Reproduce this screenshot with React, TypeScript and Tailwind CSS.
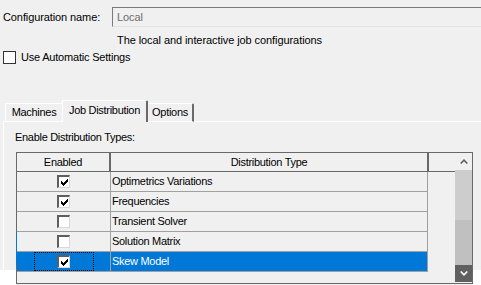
import React from "react";

const CheckMark = ({ color = "#000" }: { color?: string }) => (
  <svg width="7" height="7" viewBox="0 0 7 7" shapeRendering="crispEdges">
    <path
      d="M6 0h1v3h-1v1h-1v1h-1v1h-1v1h-1v-1h-1v-1h-1v-3h1v1h1v1h1v-1h1v-1h1z"
      fill={color}
    />
  </svg>
);

const GridCheckbox = ({ checked }: { checked: boolean }) => (
  <div className="w-[13px] h-[13px] bg-white border-t-2 border-l-2 border-t-[#5e5e5e] border-l-[#5e5e5e] border-r border-b border-r-[#d8d8d8] border-b-[#d8d8d8] flex items-center justify-center">
    {checked && <CheckMark />}
  </div>
);

const rows = [
  { label: "Optimetrics Variations", checked: true, selected: false },
  { label: "Frequencies", checked: true, selected: false },
  { label: "Transient Solver", checked: false, selected: false },
  { label: "Solution Matrix", checked: false, selected: false },
  { label: "Skew Model", checked: true, selected: true },
];

export default function App() {
  return (
    <div className="relative w-[481px] h-[285px] overflow-hidden bg-[#f0f0f0] text-black text-[11px] font-['Liberation_Sans',Arial,sans-serif] pt-[7px]">
      {/* Configuration name row */}
      <div className="flex h-[20px] items-stretch tracking-[-0.1px]">
        <div className="w-[112px] pl-[3px] flex items-center">Configuration name:</div>
        <div className="flex-1 border-t border-l border-t-[#7a7a7a] border-l-[#7a7a7a] border-b border-b-[#e3e3e3] pl-[4px] flex items-center text-[#6d6d6d]">
          Local
        </div>
      </div>

      <div className="mt-[6px] leading-[14px] pl-[117px] tracking-[-0.08px]">
        The local and interactive job configurations
      </div>

      <div className="mt-[4px] h-[13px] flex items-center pl-[3px] gap-[5px] tracking-[-0.2px]">
        <div className="w-[13px] h-[13px] border border-[#333333] bg-white" />
        <span>Use Automatic Settings</span>
      </div>

      {/* Tabs */}
      <div className="mt-[36px] flex items-end h-[22px] tracking-[-0.3px]">
        <div className="w-[3px]" />
        <div className="w-[2px] border-b border-white" />
        <div className="w-[57px] h-[19px] border-t border-l border-b border-white rounded-tl-[2px] flex items-center justify-center">
          Machines
        </div>
        <div className="w-[86px] h-[22px] border-t border-l border-white border-r-2 border-r-[#696969] rounded-t-[2px] flex items-center justify-center pb-[2px]">
          Job Distribution
        </div>
        <div className="w-[46px] h-[19px] border-t border-b border-white border-r-2 border-r-[#696969] border-b-white rounded-tr-[2px] flex items-center justify-center">
          Options
        </div>
        <div className="flex-1 border-b border-white" />
      </div>

      {/* Panel */}
      <div className="ml-[3px] border-l border-white pl-[12px] pt-[8px] h-[200px] tracking-[-0.3px]">
        <div className="leading-[14px] -ml-[1px]">Enable Distribution Types:</div>

        <div className="mt-[8px] w-[457px] h-[132px] border border-[#696969] flex">
          <div className="w-[438px] flex flex-col">
            {/* header */}
            <div className="flex h-[19px] border-b border-[#696969]">
              <div className="w-[94px] border-r-2 border-[#696969] flex items-center justify-center">
                Enabled
              </div>
              <div className="w-[318px] border-r-2 border-[#696969] flex items-center justify-center">
                Distribution Type
              </div>
              <div className="flex-1" />
            </div>
            {rows.map((r) => (
              <div key={r.label} className="flex h-[20px]">
                <div
                  className={`w-[94px] border-r border-b border-[#a0a0a0] flex items-center justify-center ${
                    r.selected ? "bg-[#0078d7]" : ""
                  }`}
                >
                  {r.selected ? (
                    <div className="w-[60px] h-[19px] border border-dotted border-black flex items-center justify-center">
                      <GridCheckbox checked={r.checked} />
                    </div>
                  ) : (
                    <GridCheckbox checked={r.checked} />
                  )}
                </div>
                <div
                  className={`w-[317px] border-r border-b border-[#a0a0a0] pl-[1px] flex items-center ${
                    r.selected ? "bg-[#0078d7] text-white" : ""
                  }`}
                >
                  {r.label}
                </div>
                <div className="flex-1" />
              </div>
            ))}
          </div>
          {/* scrollbar */}
          <div className="w-[17px] flex flex-col">
            <div className="h-[17px] bg-[#f0f0f0] flex items-center justify-center">
              <svg width="8" height="5" viewBox="0 0 8 5">
                <polyline points="0.7,4.5 4,1.2 7.3,4.5" fill="none" stroke="#606060" strokeWidth="1.6" />
              </svg>
            </div>
            <div className="h-[50px] bg-[#cdcdcd]" />
            <div className="h-[45px] bg-[#c0c0c0]" />
            <div className="h-[17px] bg-[#606060] flex items-center justify-center">
              <svg width="8" height="5" viewBox="0 0 8 5">
                <polyline points="0.7,0.5 4,3.8 7.3,0.5" fill="none" stroke="#ffffff" strokeWidth="1.6" />
              </svg>
            </div>
          </div>
        </div>
      </div>

      {/* screenshot edge artifacts */}
      <div className="absolute left-[16px] top-[232px] w-[1px] h-[33px] bg-[#0078d7]" />
      <div className="absolute left-0 top-[270px] w-[16px] h-[15px] bg-white" />
      <div className="absolute right-0 top-[270px] w-[8px] h-[15px] bg-white" />
    </div>
  );
}
